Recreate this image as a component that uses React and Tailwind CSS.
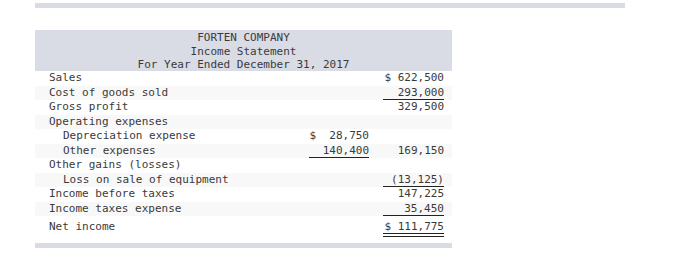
import React from "react";

const rows = [
  { label: "Sales", right: "$ 622,500" },
  { label: "Cost of goods sold", right: "293,000", rightLine: true },
  { label: "Gross profit", right: "329,500" },
  { label: "Operating expenses" },
  { label: "Depreciation expense", indent: true, mid: "$  28,750" },
  { label: "Other expenses", indent: true, mid: "140,400", midLine: true, right: "169,150" },
  { label: "Other gains (losses)" },
  { label: "Loss on sale of equipment", indent: true, right: "(13,125)", rightLine: true },
  { label: "Income before taxes", right: "147,225" },
  { label: "Income taxes expense", right: "35,450", rightLine: true },
];

const IncomeStatement = () => {
  return (
    <div
      className="w-[698px] h-[271px] bg-white text-[#3a3a3a] pt-[3px] pl-[35px]"
      style={{ fontFamily: '"DejaVu Sans Mono", "Liberation Mono", monospace' }}
    >
      {/* top strip */}
      <div className="w-[590px] h-[5px] bg-[#d9dce5]" />

      <div className="w-[417px] mt-[22px] text-[11px]">
        {/* Header */}
        <div className="bg-[#d9dce5] h-[41px] pt-[1px] text-center leading-[13.5px]">
          <div>FORTEN COMPANY</div>
          <div>Income Statement</div>
          <div>For Year Ended December 31, 2017</div>
        </div>

        {/* Body rows */}
        {rows.map((row, i) => (
          <div
            key={row.label}
            className={`grid grid-cols-[266px_76px_75px] h-[14.5px] leading-[14px] ${
              i % 2 === 1 ? "bg-[#f8f8f8]" : "bg-white"
            }`}
          >
            <div className={row.indent ? "pl-[28px]" : "pl-[14px]"}>{row.label}</div>
            <div className="pl-2 pr-2">
              <div
                className={`text-right whitespace-pre h-[14.5px] ${
                  row.midLine ? "border-b border-[#222]" : ""
                }`}
              >
                {row.mid || ""}
              </div>
            </div>
            <div className="pl-[6px] pr-2">
              <div
                className={`text-right whitespace-pre h-[14.5px] ${
                  row.rightLine ? "border-b border-[#222]" : ""
                }`}
              >
                {row.right || ""}
              </div>
            </div>
          </div>
        ))}

        {/* Net income */}
        <div className="grid grid-cols-[266px_76px_75px] h-[24px] pt-[3px] leading-[14px]">
          <div className="pl-[14px] pt-[1px]">Net income</div>
          <div />
          <div className="pl-[6px] pr-2">
            <div className="text-right whitespace-pre h-[18px] pt-[1px] border-b-[4px] border-double border-[#222]">
              $ 111,775
            </div>
          </div>
        </div>

        {/* bottom strip */}
        <div className="h-[5px] mt-[3px] bg-[#d9dce5]" />
      </div>
    </div>
  );
};

export default IncomeStatement;
